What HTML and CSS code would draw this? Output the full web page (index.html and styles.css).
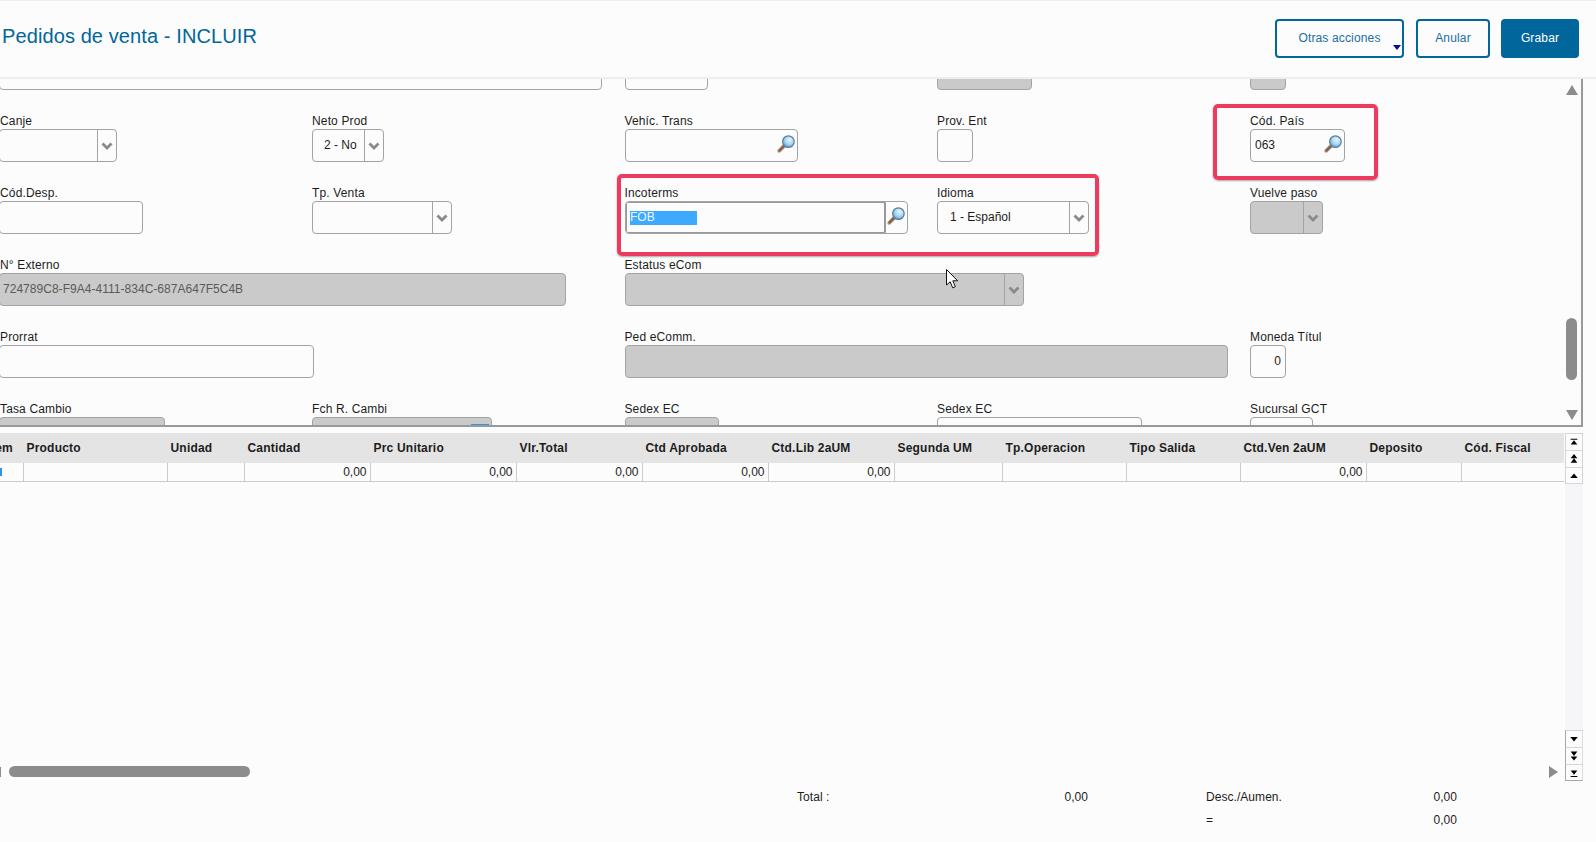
FILE: index.html
```html
<!DOCTYPE html>
<html lang="es">
<head>
<meta charset="utf-8">
<title>Pedidos de venta - INCLUIR</title>
<link rel="stylesheet" href="styles.css">
</head>
<body>
<svg class="defs" width="0" height="0" aria-hidden="true">
  <defs>
    <radialGradient id="lens" cx="0.6" cy="0.35" r="0.7">
      <stop offset="0" stop-color="#e8f6ff"/>
      <stop offset="0.55" stop-color="#a6d6f5"/>
      <stop offset="1" stop-color="#4f97cf"/>
    </radialGradient>
    <symbol id="mag" viewBox="0 0 18 18">
      <path d="M7.5 10.5 2.2 15.8" stroke="#bdb6ae" stroke-width="4" stroke-linecap="round" fill="none"/>
      <path d="M7.5 10.5 2.4 15.6" stroke="#8a6248" stroke-width="2.6" stroke-linecap="round" fill="none"/>
      <circle cx="11.4" cy="6.600" r="5.800" fill="url(#lens)" stroke="#5f7f9c" stroke-width="1.200"/>
    </symbol>
    <symbol id="chev" viewBox="0 0 12 8">
      <path d="M1.500 1.500 6 6 10.500 1.500" fill="none" stroke="#8a8a8a" stroke-width="2.800"/>
    </symbol>
    <symbol id="first" viewBox="0 0 12 12"><path d="M2 2h8v1.200H2zM6 4l4 5H2z"/></symbol>
    <symbol id="pgup" viewBox="0 0 12 12"><path d="M6 0l4 5H2zM6 5l4 5.500H2z"/></symbol>
    <symbol id="up" viewBox="0 0 12 12"><path d="M6 3l4.500 5.500h-9z"/></symbol>
    <symbol id="down" viewBox="0 0 12 12"><path d="M6 9l4.500-5.500h-9z"/></symbol>
    <symbol id="pgdn" viewBox="0 0 12 12"><path d="M6 11.500l4-5H2zM6 6l4-5.500H2z"/></symbol>
    <symbol id="last" viewBox="0 0 12 12"><path d="M2 9.500h8v1.200H2zM6 8l4-5H2z"/></symbol>
  </defs>
</svg>

<header class="topbar">
  <h1 class="title">Pedidos de venta - INCLUIR</h1>
  <div class="actions">
    <button class="btn btn-more" type="button">Otras acciones<span class="caret"></span></button>
    <button class="btn btn-cancel" type="button">Anular</button>
    <button class="btn btn-save" type="button">Grabar</button>
  </div>
</header>

<section class="panel">
  <div class="form">
    <div class="grid">
      <div class="field span2"><div class="label">&nbsp;</div><div class="box w603 edge"></div></div>
      <div class="field"><div class="label">&nbsp;</div><div class="box w83 clipicon"><svg class="mag"><use href="#mag"/></svg></div></div>
      <div class="field"><div class="label">&nbsp;</div><div class="box w95 off"></div></div>
      <div class="field"><div class="label">&nbsp;</div><div class="box w36 off"></div></div>

      <div class="field"><div class="label">Canje</div><div class="box w118 edge sel"><span class="val"></span><span class="chev"><svg><use href="#chev"/></svg></span></div></div>
      <div class="field"><div class="label">Neto Prod</div><div class="box w72 sel"><span class="val pad11">2 - No</span><span class="chev"><svg><use href="#chev"/></svg></span></div></div>
      <div class="field"><div class="label shift">Vehíc. Trans</div><div class="box w173 lookup"><span class="val"></span><svg class="mag"><use href="#mag"/></svg></div></div>
      <div class="field"><div class="label">Prov. Ent</div><div class="box w36"></div></div>
      <div class="field"><div class="label">Cód. País</div><div class="box w95 lookup"><span class="val pad4">063</span><svg class="mag"><use href="#mag"/></svg></div></div>

      <div class="field"><div class="label">Cód.Desp.</div><div class="box w144 edge"></div></div>
      <div class="field"><div class="label">Tp. Venta</div><div class="box w140 sel"><span class="val"></span><span class="chev"><svg><use href="#chev"/></svg></span></div></div>
      <div class="field"><div class="label shift">Incoterms</div><div class="box w283 lookup"><span class="focus"><span class="picked">FOB</span></span><svg class="mag"><use href="#mag"/></svg></div></div>
      <div class="field"><div class="label">Idioma</div><div class="box w152 sel"><span class="val pad12">1 - Español</span><span class="chev"><svg><use href="#chev"/></svg></span></div></div>
      <div class="field"><div class="label">Vuelve paso</div><div class="box w73 off sel"><span class="val"></span><span class="chev"><svg><use href="#chev"/></svg></span></div></div>

      <div class="field span2"><div class="label">N° Externo</div><div class="box w567 edge off"><span class="val pad3 dim">724789C8-F9A4-4111-834C-687A647F5C4B</span></div></div>
      <div class="field span2"><div class="label shift">Estatus eCom</div><div class="box w399 off sel"><span class="val"></span><span class="chev"><svg><use href="#chev"/></svg></span></div></div>
      <div class="field"></div>

      <div class="field span2"><div class="label">Prorrat</div><div class="box w315 edge"></div></div>
      <div class="field span2"><div class="label shift">Ped eComm.</div><div class="box w603 off"></div></div>
      <div class="field"><div class="label">Moneda Títul</div><div class="box w36 num"><span class="val">0</span></div></div>

      <div class="field"><div class="label">Tasa Cambio</div><div class="box w166 edge off"></div></div>
      <div class="field"><div class="label">Fch R. Cambi</div><div class="box w180 off date"><span class="datebtn"></span></div></div>
      <div class="field"><div class="label shift">Sedex EC</div><div class="box w94 off"></div></div>
      <div class="field"><div class="label">Sedex EC</div><div class="box w205"></div></div>
      <div class="field"><div class="label">Sucursal GCT</div><div class="box w63"></div></div>
    </div>
  </div>
  <div class="vscroll">
    <span class="arrow-up"></span>
    <span class="vthumb"></span>
    <span class="arrow-down"></span>
  </div>
</section>

<section class="browse">
  <div class="browse-main">
    <table class="items">
      <colgroup>
        <col class="c39"><col class="c144"><col class="c77"><col class="c126"><col class="c146"><col class="c126"><col class="c126"><col class="c126"><col class="c108"><col class="c124"><col class="c114"><col class="c126"><col class="c95"><col class="c102">
      </colgroup>
      <thead>
        <tr><th>Item</th><th>Producto</th><th>Unidad</th><th>Cantidad</th><th>Prc Unitario</th><th>Vlr.Total</th><th>Ctd Aprobada</th><th>Ctd.Lib 2aUM</th><th>Segunda UM</th><th>Tp.Operacion</th><th>Tipo Salida</th><th>Ctd.Ven 2aUM</th><th>Deposito</th><th>Cód. Fiscal</th></tr>
      </thead>
      <tbody>
        <tr><td class="item"><span class="mark"></span></td><td></td><td></td><td>0,00</td><td>0,00</td><td>0,00</td><td>0,00</td><td>0,00</td><td></td><td></td><td></td><td>0,00</td><td></td><td></td></tr>
      </tbody>
    </table>
    <div class="hscroll">
      <span class="htick"></span>
      <span class="hthumb"></span>
      <span class="arrow-right"></span>
    </div>
  </div>
  <div class="side">
    <div class="nav nav-top">
      <span class="navbtn"><svg><use href="#first"/></svg></span>
      <span class="navbtn"><svg><use href="#pgup"/></svg></span>
      <span class="navbtn"><svg><use href="#up"/></svg></span>
    </div>
    <div class="nav nav-bottom">
      <span class="navbtn"><svg><use href="#down"/></svg></span>
      <span class="navbtn"><svg><use href="#pgdn"/></svg></span>
      <span class="navbtn"><svg><use href="#last"/></svg></span>
    </div>
  </div>
</section>

<footer class="totals">
  <span>Total :</span><span class="amount">0,00</span><span class="sub">Desc./Aumen.</span><span class="amount">0,00</span>
  <span></span><span></span><span class="sub">=</span><span class="amount">0,00</span>
</footer>

<div class="callout callout-a"></div>
<div class="callout callout-b"></div>
<svg class="cursor" width="13" height="20" viewBox="0 0 13 20"><path d="M.5.500v15.500l3.700-3.200 2.500 6 2.600-1.100-2.500-5.900h4.900z" fill="#fff" stroke="#111" stroke-width="1"/></svg>
</body>
</html>
```
FILE: styles.css
```css
* { box-sizing: border-box; }
html, body { margin: 0; padding: 0; }
body {
  width: 1596px;
  height: 842px;
  overflow: hidden;
  position: relative;
  background: #fcfcfc;
  color: #1c1c1c;
  font: 12px/14px "Liberation Sans", Arial, sans-serif;
}
.defs { position: absolute; }

.topbar {
  height: 79px;
  border-top: 1px solid #eeeeee;
  border-bottom: 2px solid #eeeeee;
  display: flex;
  justify-content: space-between;
  align-items: flex-start;
  padding: 18px 17px 0 2px;
}
.title {
  margin: 5px 0 0;
  font-size: 20px;
  line-height: 24px;
  font-weight: 400;
  letter-spacing: .1px;
  color: #00669b;
}
.actions { display: flex; gap: 12px; }
.btn {
  height: 39px;
  border: 2px solid #00669b;
  border-radius: 4px;
  background: #fcfcfc;
  color: #1a6ea3;
  font: 12px "Liberation Sans", Arial, sans-serif;
  letter-spacing: .15px;
  padding: 0 0 1px;
  position: relative;
}
.btn-more { width: 129px; }
.btn-cancel { width: 74px; margin-right: -1px; }
.btn-save { width: 78px; background: #00669b; color: #fff; }
.caret {
  position: absolute;
  right: 1px;
  bottom: 6px;
  border-left: 4px solid transparent;
  border-right: 4px solid transparent;
  border-top: 5px solid #0a0a8c;
}

.panel {
  width: 1583px;
  height: 348px;
  display: flex;
  border-right: 2px solid #999999;
  border-bottom: 2px solid #999999;
}
.form { width: 1565px; height: 346px; overflow: hidden; flex: none; }
.grid {
  margin-top: -39px;
  display: grid;
  grid-template-columns: 312px 313px 312px 313px 1fr;
  grid-auto-rows: 72px;
}
.field { min-width: 0; }
.span2 { grid-column: span 2; }
.label { height: 17px; line-height: 19px; white-space: nowrap; letter-spacing: .15px; }
.shift { margin-left: -.6px; }

.box {
  height: 33px;
  border: 1px solid #a3a3a3;
  border-radius: 4px;
  background: #fcfcfc;
  display: flex;
  align-items: center;
  overflow: hidden;
}
.edge { margin-left: -1px; }
.off { background: #cacaca; }
.w36 { width: 36px; }
.w63 { width: 63px; }
.w72 { width: 72px; }
.w73 { width: 73px; }
.w83 { width: 83px; }
.w94 { width: 94px; }
.w95 { width: 95px; }
.w118 { width: 118px; }
.w140 { width: 140px; }
.w144 { width: 144px; }
.w152 { width: 152px; }
.w166 { width: 166px; }
.w173 { width: 173px; }
.w180 { width: 180px; }
.w205 { width: 205px; }
.w283 { width: 283px; }
.w315 { width: 315px; }
.w399 { width: 399px; }
.w567 { width: 567px; }
.w603 { width: 603px; }

.val { flex: 1; min-width: 0; white-space: nowrap; margin-bottom: 2px; }
.pad3 { padding-left: 3px; }
.pad4 { padding-left: 4px; }
.pad11 { padding-left: 11px; }
.pad12 { padding-left: 12px; }
.dim { color: #5a5a5a; letter-spacing: .03px; }
.num .val { text-align: right; padding-right: 4px; }

.chev {
  width: 19px;
  height: 100%;
  border-left: 1px solid #a3a3a3;
  display: flex;
  align-items: center;
  justify-content: center;
  flex: none;
}
.chev svg { width: 12px; height: 8px; margin-top: 1px; }

.mag { width: 18px; height: 18px; flex: none; margin: 0 2px 3px 0; }
.lookup { justify-content: space-between; }
.clipicon { justify-content: flex-end; align-items: flex-start; }
.clipicon .mag { margin-top: -14px; margin-right: 5px; }

.focus {
  width: 261px;
  height: 33px;
  margin: -1px 0 -1px -1px;
  border: 2px solid #999999;
  border-radius: 3px;
  padding-left: 3px;
  display: flex;
  align-items: center;
  flex: none;
  background: #fcfcfc;
}
.picked {
  width: 67px;
  height: 14px;
  line-height: 12px;
  background: #3daaff;
  color: #eaf6ff;
}
.date { align-items: flex-start; justify-content: flex-end; }
.datebtn {
  width: 18px;
  margin: 6px 2px 0 0;
  border-top: 2px solid #2f93ea;
}

.vscroll {
  width: 13px;
  display: flex;
  flex-direction: column;
  align-items: center;
  padding-top: 6px;
}
.arrow-up {
  width: 0;
  border-left: 6.5px solid transparent;
  border-right: 6.5px solid transparent;
  border-bottom: 10px solid #8c8c8c;
}
.vthumb {
  width: 11px;
  height: 62px;
  margin-top: 223px;
  border-radius: 6px;
  background: #8c8c8c;
  flex: none;
}
.arrow-down {
  width: 0;
  margin-top: 30px;
  border-left: 6.5px solid transparent;
  border-right: 6.5px solid transparent;
  border-top: 10px solid #8c8c8c;
}

.browse {
  width: 1583px;
  height: 348px;
  margin-top: 6px;
  display: flex;
  justify-content: space-between;
}
.browse-main {
  width: 1564px;
  overflow: hidden;
  display: flex;
  flex-direction: column;
}
.items {
  width: 1579px;
  margin-left: -15px;
  flex: none;
  table-layout: fixed;
  border-collapse: separate;
  border-spacing: 0;
}
.c39 { width: 39px; }
.c77 { width: 77px; }
.c95 { width: 95px; }
.c102 { width: 102px; }
.c108 { width: 108px; }
.c114 { width: 114px; }
.c124 { width: 124px; }
.c126 { width: 126px; }
.c144 { width: 144px; }
.c146 { width: 146px; }
.items th {
  height: 30px;
  padding: 0 0 0 2.5px;
  background: #e4e4e4;
  text-align: left;
  font-weight: 700;
  letter-spacing: .2px;
  white-space: nowrap;
  overflow: hidden;
}
.items td {
  height: 19px;
  padding: 0 3.5px 0 0;
  text-align: right;
  border-right: 1px solid #cccccc;
  border-bottom: 1px solid #cccccc;
}
.items td:last-child { border-right: 0; }
.item.item { text-align: left; padding-left: 15px; }
.mark { display: block; width: 2px; height: 8px; background: #2f93ea; }

.hscroll {
  margin-top: auto;
  margin-bottom: 3px;
  height: 13px;
  display: flex;
  align-items: center;
}
.htick { width: 1px; height: 10px; background: #8c8c8c; }
.hthumb {
  width: 241px;
  height: 11px;
  margin-left: 8px;
  border-radius: 6px;
  background: #8c8c8c;
}
.arrow-right {
  margin: 0 6px 0 auto;
  border-top: 6px solid transparent;
  border-bottom: 6px solid transparent;
  border-left: 9px solid #8c8c8c;
}

.side {
  width: 18px;
  display: flex;
  flex-direction: column;
  justify-content: space-between;
  background: #f6f6f9;
}
.nav { display: flex; flex-direction: column; }
.navbtn {
  height: 17px;
  display: flex;
  align-items: center;
  justify-content: center;
  background: #fcfcfc;
  border: 1px solid #d4d4d4;
  border-bottom: 0;
}
.navbtn svg { width: 10px; height: 10px; }
.nav-top .navbtn:last-child { border-bottom: 1px solid #d4d4d4; }
.nav-bottom .navbtn { border-left: 1px solid #a8a8a8; border-right-color: #dddddd; }
.nav-bottom .navbtn:last-child { border-bottom: 1px solid #a8a8a8; }

.totals {
  padding: 4px 0 0 797px;
  display: grid;
  grid-template-columns: 240px 51px 312px 57px;
  grid-auto-rows: 23px;
  align-items: center;
  letter-spacing: .05px;
}
.amount { text-align: right; }
.sub { padding-left: 118px; }

.callout {
  position: absolute;
  border: 4px solid #ee3a5f;
  border-radius: 5px;
  box-shadow: 0 1px 2px rgba(0, 0, 0, .35);
}
.callout-a { left: 617px; top: 174px; width: 482px; height: 82px; }
.callout-b { left: 1213px; top: 104px; width: 165px; height: 76px; }
.cursor { position: absolute; left: 946px; top: 269px; }
```
